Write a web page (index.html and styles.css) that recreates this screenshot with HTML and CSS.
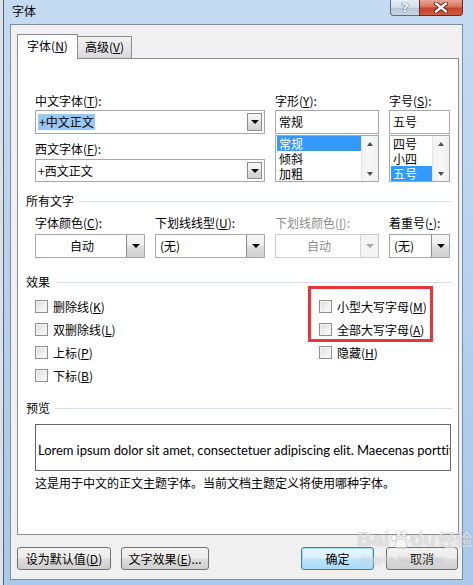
FILE: index.html
```html
<!DOCTYPE html>
<html lang="zh-CN">
<head>
    <meta charset="UTF-8">
    <title>字体</title>
    <link rel="stylesheet" href="styles.css">
</head>
<body>
    <div class="window">
        <!-- Title bar -->
        <div class="titlebar">
            <span class="title">字体</span>
            <div class="caption-btns">
                <span class="cap help">?</span>
                <span class="cap close">
                    <svg width="16" height="11" viewBox="0 0 16 11">
                        <path d="M3 1.5 L13 9.5 M13 1.5 L3 9.5" stroke="#5a2218" stroke-width="4.2" stroke-linecap="round"/>
                        <path d="M3 1.5 L13 9.5 M13 1.5 L3 9.5" stroke="#fff" stroke-width="2.4" stroke-linecap="round"/>
                    </svg>
                </span>
            </div>
        </div>

        <div class="client">
            <div class="tabs">
                <div class="tab active"><span>字体(<u>N</u>)</span></div>
                <div class="tab"><span>高级(<u>V</u>)</span></div>
            </div>

            <div class="panel">
                <!-- Font family / style / size -->
                <div class="font-row">
                    <div class="field-col">
                        <div class="label">中文字体(<u>T</u>):</div>
                        <div class="combo tall">
                            <span class="value"><span class="selected-text">+中文正文</span></span>
                            <span class="drop inset"><i></i></span>
                        </div>
                        <div class="label second">西文字体(<u>F</u>):</div>
                        <div class="combo">
                            <span class="value">+西文正文</span>
                            <span class="drop inset"><i></i></span>
                        </div>
                    </div>
                    <div class="field-col">
                        <div class="label">字形(<u>Y</u>):</div>
                        <div class="textbox">常规</div>
                        <div class="listbox">
                            <ul>
                                <li class="on">常规</li>
                                <li>倾斜</li>
                                <li>加粗</li>
                            </ul>
                            <div class="vscroll"><i class="up"></i><i class="down"></i></div>
                        </div>
                    </div>
                    <div class="field-col">
                        <div class="label">字号(<u>S</u>):</div>
                        <div class="textbox">五号</div>
                        <div class="listbox">
                            <ul>
                                <li>四号</li>
                                <li>小四</li>
                                <li class="on">五号</li>
                            </ul>
                            <div class="vscroll"><i class="up"></i><i class="down"></i></div>
                        </div>
                    </div>
                </div>

                <!-- All text -->
                <div class="group-title first"><span>所有文字</span><i></i></div>
                <div class="color-row">
                    <div class="field-col">
                        <div class="label">字体颜色(<u>C</u>):</div>
                        <div class="combo tall">
                            <span class="value center">自动</span>
                            <span class="drop"><i></i></span>
                        </div>
                    </div>
                    <div class="field-col">
                        <div class="label">下划线线型(<u>U</u>):</div>
                        <div class="combo tall">
                            <span class="value pad">(无)</span>
                            <span class="drop"><i></i></span>
                        </div>
                    </div>
                    <div class="field-col disabled">
                        <div class="label">下划线颜色(<u>I</u>):</div>
                        <div class="combo tall">
                            <span class="value center">自动</span>
                            <span class="drop"><i></i></span>
                        </div>
                    </div>
                    <div class="field-col">
                        <div class="label">着重号(<u class="dot">·</u>):</div>
                        <div class="combo tall">
                            <span class="value pad">(无)</span>
                            <span class="drop"><i></i></span>
                        </div>
                    </div>
                </div>

                <!-- Effects -->
                <div class="group-title effects-title"><span>效果</span><i></i></div>
                <div class="effects">
                    <div class="check-col">
                        <label class="check"><span class="box"></span><span>删除线(<u>K</u>)</span></label>
                        <label class="check"><span class="box"></span><span>双删除线(<u>L</u>)</span></label>
                        <label class="check"><span class="box"></span><span>上标(<u>P</u>)</span></label>
                        <label class="check"><span class="box"></span><span>下标(<u>B</u>)</span></label>
                    </div>
                    <div class="check-col">
                        <label class="check"><span class="box"></span><span>小型大写字母(<u>M</u>)</span></label>
                        <label class="check"><span class="box"></span><span>全部大写字母(<u>A</u>)</span></label>
                        <label class="check"><span class="box"></span><span>隐藏(<u>H</u>)</span></label>
                    </div>
                    <div class="highlight-box"></div>
                </div>

                <!-- Preview -->
                <div class="group-title preview-title"><span>预览</span><i></i></div>
                <div class="preview">
                    <span>Lorem ipsum dolor sit amet, consectetuer adipiscing elit. Maecenas porttitor congue massa.</span>
                </div>
                <div class="hint">这是用于中文的正文主题字体。当前文档主题定义将使用哪种字体。</div>
            </div>

            <div class="actions">
                <button class="btn w-default"><span>设为默认值(<u>D</u>)</span></button>
                <button class="btn w-effects"><span>文字效果(<u>E</u>)...</span></button>
                <button class="btn w-ok primary">确定</button>
                <button class="btn w-cancel">取消</button>
            </div>
        </div>

        <!-- watermark -->
        <div class="watermark">
            <div class="wm-logo">Bai<svg class="paw" width="22" height="20" viewBox="0 0 22 20">
                <ellipse cx="4" cy="8" rx="2.6" ry="3.2"/>
                <ellipse cx="8.5" cy="3.5" rx="2.6" ry="3.2"/>
                <ellipse cx="14" cy="3.5" rx="2.6" ry="3.2"/>
                <ellipse cx="18.5" cy="8" rx="2.6" ry="3.2"/>
                <path d="M11 9 C7 9 5 14 5 16 C5 19 8 19 11 18 C14 19 17 19 17 16 C17 14 15 9 11 9 Z"/>
            </svg>du<span class="wm-cn">经验</span></div>
            <div class="wm-url">jingyan.baidu.com</div>
        </div>
    </div>
</body>
</html>
```

FILE: styles.css
```css
* {
    box-sizing: border-box;
}

body {
    margin: 0;
    background: #dde2e8;
    font-family: "Noto Sans CJK SC", "Microsoft YaHei", sans-serif;
    font-size: 12px;
    color: #000;
}

u {
    text-decoration: underline;
    text-underline-offset: 1px;
}

u.dot {
    font-family: "Liberation Sans", sans-serif;
    font-weight: bold;
}

.window {
    position: relative;
    width: 470px;
    height: 585px;
    margin-left: 3px;
    border-left: 1px solid #52627a;
    background: linear-gradient(180deg, #c5dbf1 0%, #b9d2ed 45%, #a9c8ea 100%);
    overflow: hidden;
}

/* Title bar */
.titlebar {
    display: flex;
    height: 24px;
    padding-left: 8px;
}

.title {
    line-height: 22px;
    color: #000;
}

.caption-btns {
    display: flex;
    margin-left: auto;
    margin-right: 10px;
    height: 16px;
}

.cap {
    display: flex;
    align-items: center;
    justify-content: center;
    height: 16px;
    border: 1px solid #5d6c80;
    border-top: none;
}

.help {
    width: 29px;
    border-radius: 0 0 0 4px;
    border-right: none;
    background: linear-gradient(180deg, #e6eef7 0%, #cfdcea 50%, #b6c7da 55%, #c9d7e6 100%);
    color: #fff;
    font-family: "DejaVu Sans", sans-serif;
    font-size: 13px;
    font-weight: bold;
    text-shadow: 0 0 1px #34414f, 0 0 1px #34414f;
}

.close {
    width: 44px;
    border-radius: 0 0 4px 0;
    border-color: #6b2a1e;
    background: linear-gradient(180deg, #e9a897 0%, #d8735c 45%, #c5432a 55%, #d45c40 100%);
}

/* Client area */
.client {
    width: 453px;
    height: 556px;
    margin-left: 6px;
    border: 1px solid #7f8da1;
    background: #f0f0f0;
    padding: 9px 3px 0 6px;
}

.tabs {
    display: flex;
    align-items: flex-end;
    height: 24px;
}

.tab {
    display: flex;
    align-items: center;
    justify-content: center;
    width: 55px;
    height: 22px;
    margin-left: -1px;
    border: 1px solid #898c95;
    border-bottom: none;
    background: linear-gradient(180deg, #f2f2f2 0%, #e6e6e6 50%, #d9d9d9 100%);
    line-height: 16px;
    padding-bottom: 1px;
}

.tab.active {
    position: relative;
    z-index: 1;
    width: 61px;
    height: 25px;
    margin-left: 0;
    margin-bottom: -1px;
    background: linear-gradient(180deg, #fbfbfb, #ffffff);
    padding-bottom: 2px;
}

.panel {
    height: 477px;
    border: 1px solid #898c95;
    background: #fff;
    padding: 34px 6px 0 8px;
}

.label {
    height: 16px;
    line-height: 16px;
    white-space: nowrap;
}

.font-row {
    display: grid;
    grid-template-columns: 230px 104px 61px;
    column-gap: 10px;
    padding-left: 9px;
}

.font-row .label.second {
    margin-top: 7px;
}

.combo,
.textbox {
    display: flex;
    height: 23px;
    margin-top: 2px;
    border: 1px solid #a3a7ae;
    background: #fff;
    line-height: 16px;
}

.combo.tall,
.textbox {
    height: 24px;
    margin-top: 1px;
}

.combo .value {
    flex: 1;
    display: flex;
    align-items: center;
    padding-left: 2px;
    white-space: nowrap;
}

.combo .value.center {
    justify-content: center;
}

.combo .value.pad {
    padding-left: 4px;
}

.selected-text {
    background: #9bc8f3;
    padding: 0 1px;
    line-height: 16px;
}

.drop {
    display: flex;
    align-items: center;
    justify-content: center;
    width: 18px;
    border-left: 1px solid #8c8c8c;
    background: linear-gradient(180deg, #f7f7f7 0%, #ececec 45%, #dcdcdc 55%, #d2d2d2 100%);
}

.drop.inset {
    width: 15px;
    margin: 2px 2px 2px 0;
    border: 1px solid #8c8c8c;
}

.drop i {
    width: 0;
    height: 0;
    border-left: 4px solid transparent;
    border-right: 4px solid transparent;
    border-top: 4px solid #000;
}

.textbox {
    align-items: center;
    padding-left: 3px;
}

.listbox {
    display: flex;
    height: 47px;
    margin-top: 1px;
    border: 1px solid #a3a7ae;
    background: #fff;
}

.listbox ul {
    flex: 1;
    margin: 0;
    padding: 0 0 0 1px;
    list-style: none;
}

.listbox li {
    height: 15px;
    line-height: 15px;
    padding-left: 2px;
    overflow: hidden;
}

.listbox li.on {
    background: #3399ff;
    color: #fff;
}

.vscroll {
    display: flex;
    flex-direction: column;
    justify-content: space-between;
    align-items: center;
    width: 17px;
    padding: 6px 0 5px;
    background: linear-gradient(90deg, #f2f2f2, #f8f8f8, #eeeeee);
    border-left: 1px solid #e6e6e6;
}

.vscroll i {
    width: 0;
    height: 0;
    border-left: 3.5px solid transparent;
    border-right: 3.5px solid transparent;
}

.vscroll .up {
    border-bottom: 4px solid #505050;
}

.vscroll .down {
    border-top: 4px solid #505050;
}

/* Group headers */
.group-title {
    display: flex;
    align-items: center;
    gap: 5px;
    height: 16px;
    line-height: 16px;
    margin-top: 13px;
}

.group-title.first {
    margin-top: 11px;
}

.group-title.effects-title {
    margin-top: 16px;
}

.group-title.preview-title {
    margin-top: 13px;
}

.group-title i {
    flex: 1;
    height: 1px;
    background: #d5dfe5;
}

.color-row {
    display: grid;
    grid-template-columns: 110px 110px 104px 61px;
    column-gap: 10px;
    margin-top: 6px;
    padding-left: 9px;
}

.color-row .combo {
    margin-top: 3px;
}

.disabled .label,
.disabled .value {
    color: #8d8d8d;
}

.disabled .combo {
    border-color: #c9cbcf;
}

.disabled .drop {
    border-left-color: #d6d6d6;
    background: #f4f4f4;
}

.disabled .drop i {
    border-top-color: #a8a8a8;
}

/* Effects */
.effects {
    position: relative;
    display: grid;
    grid-template-columns: 284px 1fr;
    margin-top: 5px;
    padding-left: 9px;
}

.check-col {
    display: flex;
    flex-direction: column;
}

.check {
    display: flex;
    align-items: center;
    gap: 5px;
    height: 23px;
    white-space: nowrap;
}

.box {
    width: 13px;
    height: 13px;
    border: 1px solid #8f8f8f;
    background: linear-gradient(135deg, #dcdcdc 0%, #f0f0f0 60%, #fbfbfb 100%);
    box-shadow: inset 0 0 0 1px #f4f4f4;
}

.highlight-box {
    position: absolute;
    left: 282px;
    top: -9px;
    width: 125px;
    height: 56px;
    border: 3px solid #ec3338;
}

/* Preview */
.preview {
    display: flex;
    align-items: center;
    width: 416px;
    height: 47px;
    margin: 8px 0 0 9px;
    padding: 4px 0 0 2px;
    border: 1px solid #666;
    overflow: hidden;
    white-space: nowrap;
    font-family: Lato, "Open Sans", sans-serif;
    font-size: 13px;
    letter-spacing: -0.05px;
}

.hint {
    height: 16px;
    line-height: 16px;
    margin: 4px 0 0 9px;
}

/* Bottom buttons */
.actions {
    display: flex;
    margin-top: 12px;
}

.btn {
    display: flex;
    align-items: center;
    justify-content: center;
    height: 23px;
    padding: 0;
    border: 1px solid #707070;
    border-radius: 3px;
    background: linear-gradient(180deg, #f2f2f2 0%, #ebebeb 48%, #dddddd 52%, #cfcfcf 100%);
    font-family: inherit;
    font-size: 12px;
    color: #000;
    line-height: 16px;
}

.w-default {
    width: 94px;
}

.w-effects {
    width: 88px;
    margin-left: 10px;
}

.w-ok {
    width: 73px;
    margin-left: auto;
}

.w-cancel {
    width: 72px;
    margin-left: 12px;
    margin-right: 1px;
}

.btn.primary {
    border-color: #3c7fb1;
    box-shadow: inset 0 0 0 1px #a8dcf5;
    background: linear-gradient(180deg, #eaf6fd 0%, #d9f0fc 48%, #bee6fd 52%, #a7d9f5 100%);
}

/* Baidu watermark */
.watermark {
    position: absolute;
    left: 353px;
    top: 524px;
    color: rgba(255, 255, 255, 0.6);
    text-shadow: 0 0 1px rgba(110, 110, 110, 0.5);
    pointer-events: none;
}

.wm-logo {
    display: flex;
    align-items: flex-end;
    font-family: "Liberation Sans", sans-serif;
    font-size: 21px;
    font-weight: bold;
    line-height: 30px;
}

.paw {
    fill: rgba(255, 255, 255, 0.55);
    stroke: rgba(120, 120, 120, 0.35);
    stroke-width: 0.8;
    margin: 0 -1px 4px 0;
}

.wm-cn {
    font-family: "Noto Sans CJK SC", sans-serif;
    font-size: 17px;
    margin-left: 2px;
}

.wm-url {
    font-family: "Liberation Sans", sans-serif;
    font-size: 10px;
    line-height: 12px;
    margin-left: 4px;
    letter-spacing: 0.3px;
}
```
